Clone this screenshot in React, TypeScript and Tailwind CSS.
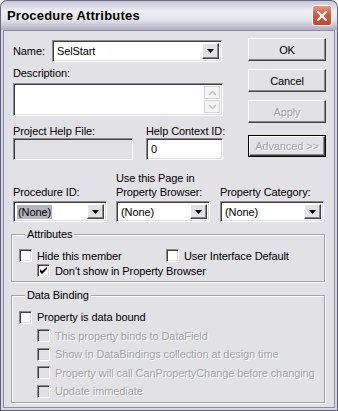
import React from 'react';

const sunken =
  'border border-t-[#8a8a8e] border-l-[#8a8a8e] border-b-white border-r-white shadow-[inset_1px_1px_0_#404040,inset_-1px_-1px_0_#dcdce0]';
const raised =
  'border border-t-white border-l-white border-b-[#404040] border-r-[#404040] shadow-[inset_-1px_-1px_0_#8a8a8e]';

const DropArrow: React.FC = () => (
  <div className={`w-[17px] h-full bg-[#e2e1e6] flex items-center justify-center ${raised}`}>
    <svg width="7" height="4" viewBox="0 0 7 4">
      <path d="M0 0h7L3.5 4z" fill="#000" />
    </svg>
  </div>
);

interface ComboProps {
  value: string;
  width: string;
  highlight?: boolean;
}

const Combo: React.FC<ComboProps> = ({ value, width, highlight }) => (
  <div className={`${width} h-[21px] bg-white flex items-stretch p-[2px] ${sunken}`}>
    <div className="flex-1 flex items-center pl-[1px]">
      <span className={highlight ? 'bg-[#b4b3c2] px-[1px]' : 'px-[1px]'}>{value}</span>
    </div>
    <DropArrow />
  </div>
);

const Button: React.FC<{ label: string; disabled?: boolean; outlined?: boolean }> = ({
  label,
  disabled,
  outlined
}) =>
  outlined ? (
    <div className="w-[78px] h-[22px] border border-black">
      <div className={`w-full h-full flex items-center justify-center ${raised}`}>
        <span className="text-[#a3a3a8] [text-shadow:1px_1px_0_#fff]">{label}</span>
      </div>
    </div>
  ) : (
    <div className={`w-[78px] h-[23px] flex items-center justify-center ${raised}`}>
      <span className={disabled ? 'text-[#a3a3a8] [text-shadow:1px_1px_0_#fff]' : 'text-black'}>{label}</span>
    </div>
  );

const Checkbox: React.FC<{ label: string; checked?: boolean; disabled?: boolean }> = ({
  label,
  checked,
  disabled
}) => (
  <div className="flex items-center h-full whitespace-nowrap">
    <div
      className={`w-[13px] h-[13px] shrink-0 flex items-center justify-center ${sunken} ${
        disabled ? 'bg-[#e2e1e6]' : 'bg-white'
      }`}
    >
      {checked && (
        <svg width="7" height="7" viewBox="0 0 7 7">
          <path d="M0 2v3l2 2 5-5V0L2 4z" fill="#000" />
        </svg>
      )}
    </div>
    <span className={`ml-[5px] ${disabled ? 'text-[#a3a3a8] [text-shadow:1px_1px_0_#fff]' : 'text-black'}`}>
      {label}
    </span>
  </div>
);

const App: React.FC = () => {
  return (
    <div className="w-[338px] h-[411px] flex flex-col font-['Liberation_Sans',Arial,sans-serif] text-[11px] leading-[14px] tracking-[-0.1px] text-black select-none whitespace-nowrap">
      {/* Title bar */}
      <div className="h-[30px] shrink-0 rounded-t-[7px] border border-b-0 border-[#6a6a82] bg-[linear-gradient(to_bottom,#c6c6d6_0%,#eeeef4_35%,#e4e4ec_65%,#aeaec4_100%)] flex items-center pl-[6px] pr-[5px]">
        <span className="flex-1 text-[13px] font-bold tracking-[0.2px] text-black">Procedure Attributes</span>
        <div className="w-[20px] h-[21px] rounded-[3px] border border-white bg-[linear-gradient(to_bottom,#e69a85,#d35b40_45%,#c0472d)] flex items-center justify-center">
          <svg width="10" height="10" viewBox="0 0 10 10">
            <path d="M1 1L9 9M9 1L1 9" stroke="#fff" strokeWidth="2" strokeLinecap="square" />
          </svg>
        </div>
      </div>

      {/* Frame + body */}
      <div className="flex-1 min-h-0 border border-t-0 border-[#5e5e78] bg-[#d8d8e2] px-[2px] pb-[2px]">
        <div className="h-full border border-[#8c8ca6] bg-[#e2e1e6] pl-[9px] pr-[6px] pt-[7px]">
          {/* Top section */}
          <div className="flex">
            <div className="w-[210px] flex flex-col">
              <div className="mt-[2px] h-[22px] flex items-center">
                <span className="w-[39px]">Name:</span>
                <Combo value="SelStart" width="w-[170px] h-[22px]" />
              </div>
              <div className="mt-[4px]">Description:</div>
              <div className={`mt-[3px] h-[33px] bg-white flex p-[2px] ${sunken}`}>
                <div className="flex-1" />
                <div className="w-[16px] flex flex-col gap-[1px]">
                  <div className="flex-1 border border-[#d4d4dc] bg-[#f4f4f6] flex items-center justify-center">
                    <svg width="9" height="6" viewBox="0 0 9 6">
                      <path d="M1 5L4.5 1.5L8 5" stroke="#c4c4cc" strokeWidth="1.5" fill="none" />
                    </svg>
                  </div>
                  <div className="flex-1 border border-[#d4d4dc] bg-[#f4f4f6] flex items-center justify-center">
                    <svg width="9" height="6" viewBox="0 0 9 6">
                      <path d="M1 1L4.5 4.5L8 1" stroke="#c4c4cc" strokeWidth="1.5" fill="none" />
                    </svg>
                  </div>
                </div>
              </div>
              <div className="mt-[8px] flex">
                <div className="w-[133px] flex flex-col">
                  <span>Project Help File:</span>
                  <div className={`w-[120px] h-[22px] bg-[#e2e1e6] ${sunken}`} />
                </div>
                <div className="w-[77px] flex flex-col">
                  <span>Help Context ID:</span>
                  <div className={`w-[77px] h-[22px] bg-white flex items-center pl-[4px] ${sunken}`}>0</div>
                </div>
              </div>
            </div>

            <div className="ml-[25px] flex flex-col">
              <Button label="OK" />
              <div className="mt-[8px]">
                <Button label="Cancel" />
              </div>
              <div className="mt-[8px]">
                <Button label="Apply" disabled />
              </div>
              <div className="mt-[12px]">
                <Button label="Advanced >>" outlined />
              </div>
            </div>
          </div>

          {/* Combos row */}
          <div className="mt-[11px] flex items-end">
            <div className="w-[94px] flex flex-col">
              <span>Procedure ID:</span>
              <div className="mt-[2px]">
                <Combo value="(None)" width="w-[94px]" highlight />
              </div>
            </div>
            <div className="ml-[9px] w-[94px] flex flex-col">
              <span>Use this Page in</span>
              <span>Property Browser:</span>
              <div className="mt-[2px]">
                <Combo value="(None)" width="w-[94px]" />
              </div>
            </div>
            <div className="ml-[10px] w-[104px] flex flex-col">
              <span>Property Category:</span>
              <div className="mt-[2px]">
                <Combo value="(None)" width="w-[104px]" />
              </div>
            </div>
          </div>

          {/* Attributes */}
          <fieldset className="mt-[5px] -ml-[2px] w-[314px] border border-[#a2a2aa] shadow-[inset_1px_1px_0_#fff,1px_1px_0_#fff] pl-[7px] pt-[7px] pb-[3px]">
            <legend className="ml-[6px] px-[2px] bg-[#e2e1e6]">Attributes</legend>
            <div className="h-[15px] flex">
              <div className="w-[147px]">
                <Checkbox label="Hide this member" />
              </div>
              <Checkbox label="User Interface Default" />
            </div>
            <div className="h-[15px] pl-[18px]">
              <Checkbox label="Don't show in Property Browser" checked />
            </div>
          </fieldset>

          {/* Data Binding */}
          <fieldset className="mt-[6px] -ml-[2px] w-[314px] border border-[#a2a2aa] shadow-[inset_1px_1px_0_#fff,1px_1px_0_#fff] pl-[7px] pt-[6px] pb-[1px]">
            <legend className="ml-[6px] px-[2px] bg-[#e2e1e6]">Data Binding</legend>
            <div className="h-[18.5px]">
              <Checkbox label="Property is data bound" />
            </div>
            <div className="pl-[18px]">
              <div className="h-[18.5px]">
                <Checkbox label="This property binds to DataField" disabled />
              </div>
              <div className="h-[18.5px]">
                <Checkbox label="Show in DataBindings collection at design time" disabled />
              </div>
              <div className="h-[18.5px]">
                <Checkbox label="Property will call CanPropertyChange before changing" disabled />
              </div>
              <div className="h-[18.5px]">
                <Checkbox label="Update immediate" disabled />
              </div>
            </div>
          </fieldset>
        </div>
      </div>
    </div>
  );
};

export default App;
